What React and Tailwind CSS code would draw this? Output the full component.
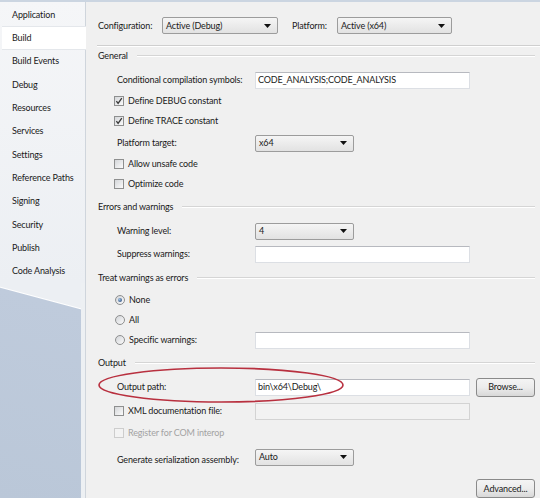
import React from 'react'

const tabs = [
  'Application',
  'Build',
  'Build Events',
  'Debug',
  'Resources',
  'Services',
  'Settings',
  'Reference Paths',
  'Signing',
  'Security',
  'Publish',
  'Code Analysis',
]

function Check({ checked, disabled }) {
  return (
    <span
      className={`flex h-[10px] w-[10px] shrink-0 items-center justify-center border ${
        disabled ? 'border-[#cdcdcd] bg-[#f3f3f3]' : 'border-[#8e8f8f] bg-gradient-to-br from-[#d4d6d9] to-[#fbfbfb]'
      }`}
    >
      {checked && (
        <svg width="8" height="8" viewBox="0 0 8 8">
          <path d="M1.4 4.1 3.1 6.4 6.8 1.1" fill="none" stroke="#3a3a3a" strokeWidth="1.3" />
        </svg>
      )}
    </span>
  )
}

function Radio({ checked }) {
  return (
    <span className="flex h-[10px] w-[10px] shrink-0 items-center justify-center rounded-full border border-[#8e8f8f] bg-gradient-to-br from-[#d2d4d8] to-[#fbfbfb]">
      {checked && (
        <span className="h-[4px] w-[4px] rounded-full bg-[radial-gradient(circle_at_35%_35%,#9cc0e4,#1d3d6e)]" />
      )}
    </span>
  )
}

function Combo({ value, className }) {
  return (
    <div
      className={`flex h-[17px] items-center justify-between rounded-[2px] border border-[#9c9c9c] bg-gradient-to-b from-[#f5f5f5] to-[#e2e2e2] pl-[3px] pr-[6px] ${className}`}
    >
      <span>{value}</span>
      <svg width="7" height="4" viewBox="0 0 7 4">
        <path d="M0 0h7L3.5 4z" fill="#111" />
      </svg>
    </div>
  )
}

function TextBox({ value, disabled }) {
  return (
    <div
      className={`flex h-[17px] w-[215px] items-center border px-[2px] ${
        disabled ? 'border-[#d3d3d3] bg-[#f2f2f2]' : 'border-[#dcdfe4] border-t-[#b7b9bf] bg-white'
      }`}
    >
      {value}
    </div>
  )
}

function Button({ children }) {
  return (
    <div className="flex h-[19px] w-[59px] items-center justify-center rounded-[3px] border border-[#8a8a8a] bg-gradient-to-b from-[#f4f4f4] via-[#ececec] to-[#d8d8d8]">
      {children}
    </div>
  )
}

function Section({ title, className = '' }) {
  return (
    <div className={`flex h-[18px] items-center pl-[12px] pr-[5px] ${className}`}>
      <span>{title}</span>
      <div className="ml-[9px] h-[2px] flex-1 border-t border-b border-t-[#d5d5d5] border-b-white" />
    </div>
  )
}

// label column ends where the controls start (x = 255)
function Field({ label, children, className = '', labelClass = '' }) {
  return (
    <div className={`flex h-[22px] items-center ${className}`}>
      <div className={`w-[169px] pl-[31px] ${labelClass}`}>{label}</div>
      {children}
    </div>
  )
}

function CheckRow({ label, checked, disabled, children, className = '' }) {
  return (
    <div className={`flex h-[20px] items-center ${className}`}>
      <div className={`flex w-[169px] items-center gap-[4px] pl-[28px] ${disabled ? 'text-[#a3a3a3]' : ''}`}>
        <Check checked={checked} disabled={disabled} />
        <span>{label}</span>
      </div>
      {children}
    </div>
  )
}

function RadioRow({ label, checked, children }) {
  return (
    <div className="flex h-[20px] items-center">
      <div className="flex w-[169px] items-center gap-[4px] pl-[29px]">
        <Radio checked={checked} />
        <span>{label}</span>
      </div>
      {children}
    </div>
  )
}

export default function App() {
  return (
    <div className="flex h-[498px] w-[540px] flex-col overflow-hidden whitespace-nowrap bg-[#f0f0f0] font-[Lato,'Noto_Sans',sans-serif] text-[9px] tracking-[-0.15px] text-[#1a1a1a]">
      <div className="h-[3px] bg-[#cbd5e1]" />
      <div className="flex flex-1">
        {/* tab strip */}
        <div className="flex w-[86px] flex-col border-r border-[#cfd5dc]">
          <div className="bg-gradient-to-b from-[#f5f6f8] to-[#eceff3] pt-[1px]">
            {tabs.map((t) =>
              t === 'Build' ? (
                <div
                  key={t}
                  className="relative z-10 -mr-px ml-[2px] flex h-[23.3px] items-center border-y border-[#e4e7eb] bg-white pl-[10px]"
                >
                  {t}
                </div>
              ) : (
                <div key={t} className="flex h-[23.3px] items-center pl-[12px]">
                  {t}
                </div>
              )
            )}
          </div>
          <div className="flex flex-1">
            <div className="flex-1 bg-[linear-gradient(195deg,#eceff3_24px,#ffffff_25px,#bfcbdc_26px,#bac7d8)]" />
            <div className="w-[4px] bg-[#edf0f3]" />
          </div>
        </div>

        {/* settings panel */}
        <div className="relative flex flex-1 flex-col">
          <div className="flex h-[43px] items-center pl-[12px] pt-[4px]">
            <span className="w-[64px]">Configuration:</span>
            <Combo value="Active (Debug)" className="w-[116px]" />
            <span className="ml-[14px] w-[45px]">Platform:</span>
            <Combo value="Active (x64)" className="w-[115px]" />
          </div>
          <div className="ml-[11px] h-[2px] border-t border-b border-t-[#cfcfcf] border-b-white" />

          <Section title="General" />
          <Field label="Conditional compilation symbols:" className="mt-[4px] h-[20px]">
            <TextBox value="CODE_ANALYSIS;CODE_ANALYSIS" />
          </Field>
          <CheckRow label="Define DEBUG constant" checked />
          <CheckRow label="Define TRACE constant" checked />
          <Field label="Platform target:" className="mt-px h-[21px]">
            <Combo value="x64" className="w-[99px]" />
          </Field>
          <CheckRow label="Allow unsafe code" />
          <CheckRow label="Optimize code" />

          <Section title="Errors and warnings" className="mt-[4px]" />
          <Field label="Warning level:" className="mt-[4px]">
            <Combo value="4" className="w-[99px]" />
          </Field>
          <Field label="Suppress warnings:" className="mt-px">
            <TextBox value="" />
          </Field>

          <Section title="Treat warnings as errors" className="mt-[4px]" />
          <div className="mt-[3px]" />
          <RadioRow label="None" checked />
          <RadioRow label="All" />
          <RadioRow label="Specific warnings:">
            <TextBox value="" />
          </RadioRow>

          <Section title="Output" className="mt-[4px]" />
          <Field label="Output path:" className="mt-[4px]">
            <TextBox value="bin\x64\Debug\" />
            <div className="ml-[6px]">
              <Button>Browse...</Button>
            </div>
          </Field>
          <CheckRow label="XML documentation file:" className="mt-[2px] h-[22px]">
            <TextBox value="" disabled />
          </CheckRow>
          <CheckRow label="Register for COM interop" disabled className="mt-px" />
          <Field label="Generate serialization assembly:" className="mt-[3px]" labelClass="pt-[6px]">
            <Combo value="Auto" className="w-[99px]" />
          </Field>
          <div className="mt-[11px] flex justify-end pr-[5px]">
            <Button>Advanced...</Button>
          </div>

          {/* hand-drawn highlight around the output path */}
          <svg
            className="pointer-events-none absolute left-[11px] top-[364px]"
            width="250"
            height="38"
            viewBox="0 0 250 38"
          >
            <ellipse cx="124" cy="19" rx="122" ry="17" fill="none" stroke="#b8303f" strokeWidth="1.6" />
          </svg>
        </div>
      </div>
    </div>
  )
}
